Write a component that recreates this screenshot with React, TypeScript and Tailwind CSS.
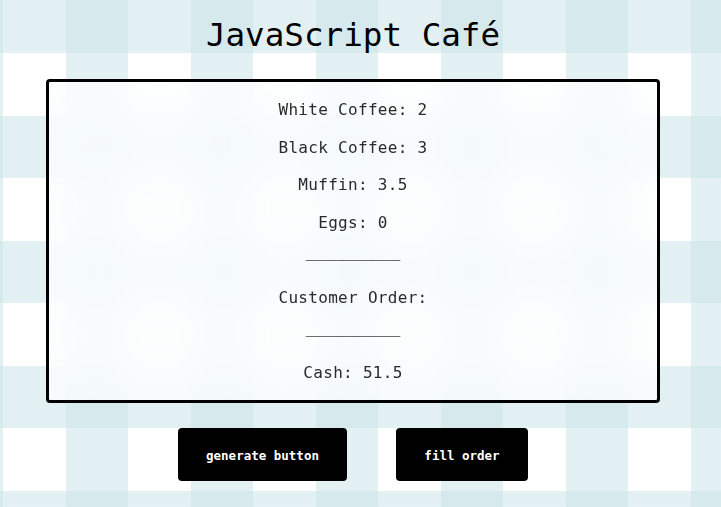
import React from 'react';

const MENU = [
  { label: 'White Coffee', price: 2 },
  { label: 'Black Coffee', price: 3 },
  { label: 'Muffin', price: 3.5 },
  { label: 'Eggs', price: 0 },
];

const mono = "font-['DejaVu_Sans_Mono','Liberation_Mono',monospace]";

const Line: React.FC<{ children: React.ReactNode; rule?: boolean }> = ({ children, rule }) => (
  <div className={`h-[24px] flex justify-center ${rule ? 'items-start' : 'items-center'}`}>
    <span className={rule ? 'leading-[8px] tracking-[-0.2px] text-[#111]' : 'leading-6'}>{children}</span>
  </div>
);

export default function App() {
  return (
    <div className="min-h-screen w-full bg-white bg-[linear-gradient(90deg,rgba(200,226,231,0.5)_50%,transparent_50%),linear-gradient(180deg,rgba(200,226,231,0.5)_50%,transparent_50%)] bg-[length:125px_125px] bg-[position:66px_116px]">
      <div className={`w-[706px] flex flex-col items-center text-black ${mono}`}>
        <h1 className="h-[79px] pt-[13px] text-[32.6px] leading-[44px] font-normal">JavaScript Café</h1>

        <div className="w-[614px] border-[3px] border-black rounded-[4px] bg-white/70 backdrop-blur-xl pt-[16px] pb-[15px] flex flex-col gap-[13.6px] text-[16px] tracking-[0.3px] text-[#2a2a2a]">
          {MENU.map((item) => (
            <Line key={item.label}>
              {item.label}: {item.price}
            </Line>
          ))}
          <Line rule>__________</Line>
          <Line>Customer Order:</Line>
          <Line rule>__________</Line>
          <Line>Cash: 51.5</Line>
        </div>

        <div className="mt-[25px] flex gap-[49px]">
          <button className="h-[53px] w-[169px] pt-[3px] bg-black text-white rounded-[4px] text-[12.5px] font-bold">
            generate button
          </button>
          <button className="h-[53px] w-[132px] pt-[3px] bg-black text-white rounded-[4px] text-[12.5px] font-bold">
            fill order
          </button>
        </div>
      </div>
    </div>
  );
}
